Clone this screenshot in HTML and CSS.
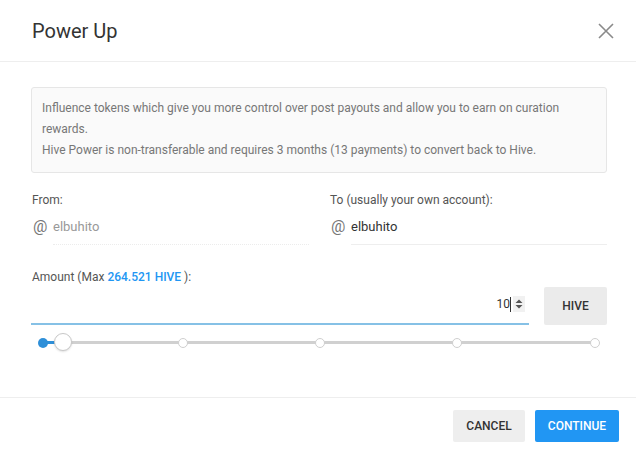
FILE: index.html
```html
<!DOCTYPE html>
<html>
<head>
<meta charset="utf-8">
<link rel="stylesheet" href="styles.css">
</head>
<body>
<div class="modal">
  <div class="header">
    <h1 class="title">Power Up</h1>
    <svg class="close" width="16" height="16" viewBox="0 0 16 16"><path d="M1 1L15 15M15 1L1 15" stroke="#8a8a8a" stroke-width="1.6" fill="none"/></svg>
  </div>
  <div class="body">
    <div class="info">
      <p>Influence tokens which give you more control over post payouts and allow you to earn on curation rewards.</p>
      <p>Hive Power is non-transferable and requires 3 months (13 payments) to convert back to Hive.</p>
    </div>
    <div class="accounts">
      <div class="field">
        <div class="label">From:</div>
        <div class="acct">
          <span class="at">@</span>
          <span class="acct-input disabled">elbuhito</span>
        </div>
      </div>
      <div class="field">
        <div class="label">To (usually your own account):</div>
        <div class="acct">
          <span class="at">@</span>
          <span class="acct-input">elbuhito</span>
        </div>
      </div>
    </div>
    <div class="label amount-label">Amount (Max <span class="max">264.521 HIVE</span> ):</div>
    <div class="amount-row">
      <div class="amount-input">
        <span class="val">10</span><span class="caret"></span>
        <span class="spin"><svg width="8" height="10" viewBox="0 0 8 10"><path d="M4 0.5L7.5 4H0.5Z M4 9.5L7.5 6H0.5Z" fill="#555"/></svg></span>
      </div>
      <div class="unit">HIVE</div>
    </div>
    <div class="slider">
      <div class="track"></div>
      <div class="fill"></div>
      <span class="start"></span>
      <span class="dot d1"></span>
      <span class="dot d2"></span>
      <span class="dot d3"></span>
      <span class="dot d4"></span>
      <span class="handle"></span>
    </div>
  </div>
  <div class="footer">
    <button class="btn cancel">CANCEL</button>
    <button class="btn continue">CONTINUE</button>
  </div>
</div>
</body>
</html>
```

FILE: styles.css
```css
* { box-sizing: border-box; }
html, body { margin: 0; padding: 0; background: #fff; }
body { font-family: Roboto, "Noto Sans", sans-serif; color: #333; }
.modal { width: 636px; height: 454px; background: #fff; }
.header {
  height: 62px;
  display: flex;
  align-items: center;
  justify-content: space-between;
  padding: 0 22px 0 32px;
  border-bottom: 1px solid #eeeeee;
}
.title { margin: 0; font-size: 20px; font-weight: 400; color: #333; line-height: 24px; padding-top: 1px; }
.close { display: block; }
.body { padding: 25px 29px 0 31px; height: 335px; }
.info {
  background: #fafafa;
  border: 1px solid #e6e6e6;
  border-radius: 3px;
  padding: 10px 10px 11px 10px;
  font-size: 12px;
  line-height: 21px;
  color: #777;
}
.info p { margin: 0; }
.accounts {
  display: grid;
  grid-template-columns: 1fr 1fr;
  column-gap: 20px;
  margin-top: 20px;
}
.label { font-size: 12px; line-height: 14px; color: #555; padding-left: 1px; }
.acct { display: flex; align-items: flex-start; margin-top: 11px; }
.at { width: 22px; font-size: 16px; color: #777; padding-left: 2px; line-height: 18px; }
.acct-input {
  flex: 1;
  font-size: 13px;
  color: #333;
  line-height: 18px;
  padding-bottom: 8px;
  border-bottom: 1px solid #eeeeee;
}
.acct-input.disabled { color: #999; border-bottom: 1px dotted #ececec; }
.amount-label { margin-top: 25px; }
.max { color: #2196f3; font-weight: 500; }
.amount-row { display: flex; align-items: flex-end; gap: 15px; margin-top: 3px; }
.amount-input {
  width: 498px;
  height: 38px;
  border-bottom: 2px solid #86c1e6;
  display: flex;
  align-items: center;
  justify-content: flex-end;
  padding: 0 4px 2px 0;
  font-size: 12px;
  color: #333;
}
.caret { width: 1px; height: 15px; background: #333; margin-left: 0; }
.spin { display: flex; align-items: center; justify-content: center; width: 12px; height: 16px; background: #f1f1f1; margin-left: 2px; }
.spin svg { display: block; }
.unit {
  width: 63px;
  height: 38px;
  background: #ebebeb;
  border-radius: 2px;
  display: flex;
  align-items: center;
  justify-content: center;
  font-size: 12px;
  font-weight: 500;
  color: #333;
}
.slider { position: relative; height: 22px; margin-top: 6px; }
.track { position: absolute; left: 12px; right: 12px; top: 10px; height: 3px; background: #d0d0d0; border-radius: 2px; }
.fill { position: absolute; left: 10px; width: 24px; top: 10px; height: 3px; background: #2f8fd8; }
.start { position: absolute; left: 7px; top: 7px; width: 10px; height: 10px; border-radius: 50%; background: #2f8fd8; }
.dot { position: absolute; top: 7px; width: 10px; height: 10px; border-radius: 50%; background: #fff; border: 1px solid #cfcfcf; }
.d1 { left: 147px; }
.d2 { left: 284px; }
.d3 { left: 421px; }
.d4 { left: 559px; }
.handle { position: absolute; left: 23px; top: 2px; width: 18px; height: 18px; border-radius: 50%; background: #fff; border: 1px solid #c8c8c8; box-shadow: 0 1px 2px rgba(0,0,0,0.12); }
.footer {
  border-top: 1px solid #eeeeee;
  display: flex;
  justify-content: flex-end;
  gap: 10px;
  padding: 12px 17px 0 0;
  height: 57px;
}
.btn {
  height: 32px;
  border: none;
  border-radius: 2px;
  font-family: Roboto, "Noto Sans", sans-serif;
  font-size: 12px;
  font-weight: 500;
  padding: 0;
}
.cancel { width: 72px; background: #eeeeee; color: #333; }
.continue { width: 84px; background: #2196f3; color: #fff; }
```
